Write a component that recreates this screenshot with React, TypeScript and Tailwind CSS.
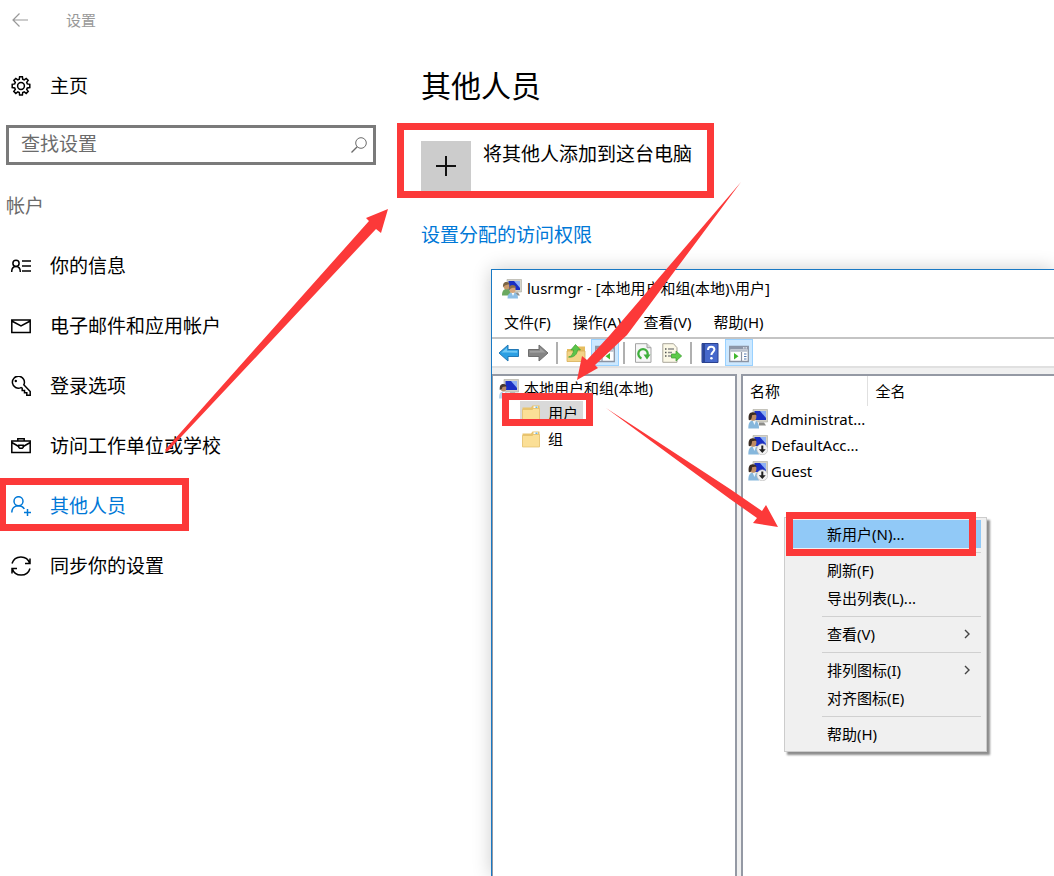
import type { ReactNode } from "react"
import clsx from "clsx"

function Stroke({ children }: { children: ReactNode }) {
  return (
    <svg
      viewBox="0 0 20 20"
      className="h-5 w-5 shrink-0"
      fill="none"
      stroke="currentColor"
      strokeWidth="1.5"
      aria-hidden="true"
    >
      {children}
    </svg>
  )
}

function GearIcon() {
  return (
    <Stroke>
      <circle cx="10" cy="10" r="3.4" />
      <path d="M8.3 3.2 8.6.8h2.8l.3 2.4 1.5.7 2-1.5 2 2-1.5 2 .6 1.5 2.5.4v3.2l-2.5.4-.6 1.5 1.5 2-2 2-2-1.5-1.5.7-.3 2.4H8.6l-.3-2.4-1.5-.7-2 1.5-2-2 1.5-2-.6-1.5-2.5-.4V8.3l2.5-.4.6-1.5-1.5-2 2-2 2 1.5z" />
    </Stroke>
  )
}

function InfoIcon() {
  return (
    <Stroke>
      <circle cx="5" cy="7.3" r="3.1" />
      <path d="M.7 16c0-3.3 1.8-5.4 4.3-5.4S9.300 12.700 9.300 16M11 5h9M11 10h9M11 15h9" />
    </Stroke>
  )
}

function MailIcon() {
  return (
    <Stroke>
      <path d="M.8 4h18.4v12.500H.8zM.8 5l9.200 5 9.200-5" />
    </Stroke>
  )
}

function KeyIcon() {
  return (
    <Stroke>
      <path d="M12.800 8.800 19.200 15.500v3.700h-3.400v-2.500h-2.300v-2.300h-2.300v-2.200l-1.200-.6A6 6 0 1 1 12.800 8.800z" />
      <circle cx="4.800" cy="5" r="1.200" fill="currentColor" stroke="none" />
    </Stroke>
  )
}

function CaseIcon() {
  return (
    <Stroke>
      <path d="M.8 5h18.400v11.500H.8zM6.800 5V2.700h6.400V5M.8 6.500l7 4M19.200 6.500l-7 4M7.800 9.300h4.400v2.200l-1 .8H8.800l-1-.8z" />
    </Stroke>
  )
}

function AddPersonIcon() {
  return (
    <Stroke>
      <circle cx="7.500" cy="5.200" r="4.500" />
      <path d="M.8 16.500c0-4.200 2.700-6.800 6.700-6.800 2.700 0 4.700 1.200 5.800 3.300M16.500 13v7M13 16.500h7" />
    </Stroke>
  )
}

function SyncIcon() {
  return (
    <Stroke>
      <path d="M1 7.500a9.300 9.300 0 0 1 17.800 0M19 2.500v5h-5M19 12.500a9.300 9.300 0 0 1-17.800 0M1 17.500v-5h5" />
    </Stroke>
  )
}

function FolderIcon() {
  return (
    <svg viewBox="0 0 18 18" className="h-[18px] w-[18px] shrink-0" aria-hidden="true">
      <path d="M.5 3.500H9L10.500 1.500H17.500V16H.5z" fill="#e9c36c" />
      <path d="M11.500 2.300h4.500v2h-4.500z" fill="#fff" />
      <path d="M13.500 2.600h2v1.200h-2z" fill="#4aa3df" />
      <path d="M.5 5.500h9.800l1.200-1h6v12.500H.5z" fill="#fbdf96" stroke="#e2bd68" strokeWidth=".7" />
    </svg>
  )
}

function Monitor() {
  return (
    <>
      <path d="M5 .5h14.500v12.500H5z" fill="#d5d3c8" stroke="#aaa99f" strokeWidth=".6" />
      <path d="M6.500 2H18v9H6.500z" fill="#1a2fc4" />
      <path d="M12 2h6v7z" fill="#8eb0f5" />
      <path d="M11 13.500h5l2 3h-7z" fill="#8e8e8a" />
    </>
  )
}

function UserIcon({ disabled = false }: { disabled?: boolean }) {
  return (
    <svg viewBox="0 0 20 20" className="h-5 w-5 shrink-0" aria-hidden="true">
      <Monitor />
      <path d="M.3 19.500c0-5.500 1.500-8 5.200-8s5.500 2.500 5.500 8z" fill="#86b7dc" />
      <path d="M4.500 11.500H8L6.500 16z" fill="#eef6fb" />
      <ellipse cx="5" cy="7.800" rx="3.400" ry="4" fill="#c08d62" />
      <path d="M.8 11C0 6 1.500 3.300 4.600 3.300c2.400 0 3.700 1 3.900 2.700-2-.4-3.400-.2-4.500.3 0 2.200-.6 4-1.700 5z" fill="#3b2c23" />
      {disabled && (
        <>
          <circle cx="14.300" cy="14.300" r="5.500" fill="#f1f1f1" stroke="#b5b5b5" strokeWidth=".6" />
          <path d="M13.300 10.500h2v3.700h2.400l-3.400 3.800-3.400-3.800h2.400z" fill="#222" />
        </>
      )}
    </svg>
  )
}

function GroupIcon() {
  return (
    <svg viewBox="0 0 20 20" className="h-5 w-5 shrink-0" aria-hidden="true">
      <Monitor />
      <path d="M0 16.500c0-4 1.300-6.500 4.500-6.500s4.500 2.500 4.500 6.500z" fill="#6aa860" />
      <ellipse cx="4.500" cy="7" rx="2.900" ry="3.500" fill="#c99a6b" />
      <path d="M1 8.500C.8 4.500 2 3 4.500 3c2 0 3 1 3 2.500C5.500 5.500 3 5.500 1 8.500z" fill="#7a6444" />
      <path d="M5.500 19.500c0-4 1.700-6 5.200-6s5.300 2 5.300 6z" fill="#8dbfe6" />
      <path d="M9.500 13.500h3l-1.500 3.500z" fill="#fff" />
      <ellipse cx="10.500" cy="10.500" rx="3.100" ry="3.600" fill="#d6a67c" />
      <path d="M7 11c-.3-3.500 1-5 3.600-5 2.300 0 3.400 1.400 3.400 3-3-.4-5 0-7 2z" fill="#8a6d4b" />
    </svg>
  )
}

function ComputerIcon() {
  return (
    <svg viewBox="0 0 20 20" className="h-5 w-5 shrink-0" aria-hidden="true">
      <Monitor />
      <path d="M0 19.500c0-5 1.300-7 4.500-7s5 2 5 7z" fill="#b9d3e8" />
      <path d="M3.500 12.500h3l-1.500 4z" fill="#fff" />
      <ellipse cx="4.500" cy="9" rx="2.800" ry="3.500" fill="#b98d6b" />
      <path d="M.8 11C.3 6.500 2 5 4.400 5c2 0 3.100 1 3.100 2.500-2-.2-3 0-4 .5-.2 1.500-.9 2.500-2.700 3z" fill="#463831" />
    </svg>
  )
}

function ArrowIcon({ forward = false }: { forward?: boolean }) {
  return (
    <svg viewBox="0 0 22 20" className={clsx("h-5 w-[22px]", forward && "-scale-x-100")} aria-hidden="true">
      <path
        d="M1 10 10 2v4.500h10.500v7H10V18z"
        fill={forward ? "#858585" : "#2b9fe3"}
        stroke={forward ? "#6f6f6f" : "#2278b5"}
        strokeLinejoin="round"
      />
      <path d="M3.500 9.500 9 4.700v3h10.300v2z" fill={forward ? "#a0a0a0" : "#6fc8f5"} />
    </svg>
  )
}

function UpFolderIcon() {
  return (
    <svg viewBox="0 0 20 20" className="h-5 w-5" aria-hidden="true">
      <path d="M1 6h8l2-2.500h8V18H1z" fill="#e6bd5f" />
      <path d="M1 8h18v10.500H1z" fill="#f3d487" stroke="#d8ae55" strokeWidth=".8" />
      <path d="M2.500 14c3-.5 5-3.500 5-7H4.800L9.500 1.500l5 5.500h-3c-.3 4.500-4 8-9 7z" fill="#5cc54a" stroke="#3c9f32" strokeWidth=".7" />
    </svg>
  )
}

function PaneIcon({ right = false }: { right?: boolean }) {
  return (
    <svg viewBox="0 0 20 20" className="h-5 w-5" aria-hidden="true">
      <path d="M.7 3.500h18.600v15H.7z" fill="#fff" stroke="#8a93a3" strokeWidth="1.300" />
      <path d="M1 3.500h18v3H1z" fill="#8d97a8" />
      <path d="M14 4.300h1.500v1.300H14zM16.500 4.300H18v1.300h-1.500z" fill="#e9eef5" />
      <path d="M1.300 7.800h17.400" stroke="#b9c1ce" strokeWidth="2" />
      {right ? (
        <>
          <path d="M12.500 9v9" stroke="#8a93a3" strokeWidth="1.200" />
          <path d="M5 10v6.600l4.500-3.300z" fill="#42b82f" />
          <path d="M15 11h2.500M15 13.500h2.500M15 16h2.500" stroke="#5379b0" strokeWidth="1.200" />
        </>
      ) : (
        <>
          <path d="M7 9v9" stroke="#8a93a3" strokeWidth="1.200" />
          <path d="M15 10v6.600l-4.500-3.300z" fill="#42b82f" />
          <path d="M2.500 11H5M2.500 13.500H5M2.500 16H5" stroke="#5379b0" strokeWidth="1.200" />
        </>
      )}
    </svg>
  )
}

function RefreshIcon() {
  return (
    <svg viewBox="0 0 20 20" className="h-5 w-5" aria-hidden="true">
      <path d="M2.500.7h11.500l4 4v14.600H2.500z" fill="#f6f6f6" stroke="#a3a3a3" />
      <path d="M14 .7v4h4" fill="#ddd" stroke="#a3a3a3" />
      <path d="M8.500 15.300a4.700 4.700 0 1 1 5.800-2.500" fill="none" stroke="#3faf3c" strokeWidth="2.300" />
      <path d="M10.500 11.500h7l-3.500 5z" fill="#3faf3c" />
    </svg>
  )
}

function ExportIcon() {
  return (
    <svg viewBox="0 0 20 20" className="h-5 w-5" aria-hidden="true">
      <path d="M.8.7h10.700l3.500 4v14.600H.8z" fill="#fbf8e6" stroke="#a9a69a" />
      <path d="M3 6h1.500M3 9.500h1.500M3 13h1.500" stroke="#555" strokeWidth="1.300" />
      <path d="M6 6h6M6 9.500h4M6 13h4" stroke="#8a8a8a" strokeWidth="1.300" />
      <path d="M9.500 11H14V8l5.700 5-5.700 5v-3H9.500z" fill="#5ccb48" stroke="#3c9c30" strokeWidth=".7" />
    </svg>
  )
}

function HelpIcon() {
  return (
    <svg viewBox="0 0 20 20" className="h-5 w-5" aria-hidden="true">
      <path d="M2 .5h16v19H2z" fill="#4668cb" stroke="#2a418f" />
      <path d="M2.500.5h2.500v19H2.500z" fill="#2b4596" />
      <path d="M8 7c0-2.300 1.300-3.300 3.200-3.300 2 0 3.200 1.100 3.200 2.800 0 2.400-3 2.600-3 5.500" fill="none" stroke="#fff" strokeWidth="2" />
      <circle cx="11.400" cy="15.300" r="1.300" fill="#fff" />
    </svg>
  )
}

const navItems = [
  { label: "你的信息", icon: <InfoIcon /> },
  { label: "电子邮件和应用帐户", icon: <MailIcon /> },
  { label: "登录选项", icon: <KeyIcon /> },
  { label: "访问工作单位或学校", icon: <CaseIcon /> },
  { label: "其他人员", icon: <AddPersonIcon />, active: true },
  { label: "同步你的设置", icon: <SyncIcon /> },
]

const users = [
  { name: "Administrat...", disabled: false },
  { name: "DefaultAcc...", disabled: true },
  { name: "Guest", disabled: true },
]

const menuGroups = [
  [{ label: "新用户(N)...", selected: true }],
  [{ label: "刷新(F)" }, { label: "导出列表(L)..." }],
  [{ label: "查看(V)", submenu: true }],
  [{ label: "排列图标(I)", submenu: true }, { label: "对齐图标(E)" }],
  [{ label: "帮助(H)" }],
] as { label: string; selected?: boolean; submenu?: boolean }[][]

function Sidebar() {
  return (
    <aside className="w-[376px] shrink-0 pl-[6px]">
      <a href="#home" className="mt-4 flex h-[60px] items-center gap-[19px] pl-[5px]">
        <GearIcon />
        主页
      </a>
      <label className="mt-[9px] flex h-10 items-center border-3 border-[#7a7a7a] pr-[6px] pl-3">
        <input
          type="search"
          aria-label="查找设置"
          placeholder="查找设置"
          className="min-w-0 flex-1 bg-transparent pb-[2px] leading-7 outline-none placeholder:text-[#6b6b6b]"
        />
        <svg viewBox="0 0 16 16" className="h-4 w-4 text-[#6b6b6b]" fill="none" stroke="currentColor" aria-hidden="true">
          <circle cx="10" cy="6" r="5.300" />
          <path d="M6.200 9.800.5 15.500" strokeWidth="1.300" />
        </svg>
      </label>
      <h2 className="mt-[26px] h-[45px] leading-[30px] text-[#6b6b6b]">帐户</h2>
      <nav>
        {navItems.map((item) => (
          <a
            key={item.label}
            href="#accounts"
            className={clsx("flex h-[60px] items-center gap-[19px] pl-[5px]", item.active && "text-[#0078d7]")}
          >
            {item.icon}
            {item.label}
          </a>
        ))}
      </nav>
    </aside>
  )
}

function OtherPeople() {
  return (
    <main className="flex-1 pt-6 pl-[45px]">
      <h1 className="text-[30px] leading-[44px]">其他人员</h1>
      <button type="button" className="mt-[33px] flex items-start gap-3">
        <span className="flex h-[50px] w-[50px] items-center justify-center bg-[#ccc]">
          <svg viewBox="0 0 20 20" className="h-5 w-5" stroke="#111" strokeWidth="2" aria-hidden="true">
            <path d="M10 0v20M0 10h20" />
          </svg>
        </span>
        <span className="leading-[26px]">将其他人添加到这台电脑</span>
      </button>
      <a href="#access" className="mt-[30px] inline-block leading-7 text-[#0078d7]">
        设置分配的访问权限
      </a>
    </main>
  )
}

function ToolButton({ label, pressed, children }: { label: string; pressed?: boolean; children: ReactNode }) {
  return (
    <button
      type="button"
      aria-label={label}
      className={clsx(
        "flex h-[27px] w-7 items-center justify-center border",
        pressed ? "border-[#99d1ff] bg-[#cce8ff]" : "border-transparent",
      )}
    >
      {children}
    </button>
  )
}

function Divider() {
  return <span className="mx-[3px] h-[22px] w-[2px] bg-[#b0b0b0]" />
}

function UserManager() {
  return (
    <section className="absolute top-[269px] right-0 bottom-0 left-[491px] flex flex-col border-t border-l border-[#1979c4] bg-white text-[15px] shadow-[0_0_18px_rgba(0,0,0,0.2)]">
      <header className="flex h-[37px] items-center gap-[5px] pl-[10px]">
        <GroupIcon />
        lusrmgr - [本地用户和组(本地)\用户]
      </header>
      <div className="flex h-[30px] items-center gap-[22px] pl-3">
        {["文件(F)", "操作(A)", "查看(V)", "帮助(H)"].map((label) => (
          <button key={label} type="button">
            {label}
          </button>
        ))}
      </div>
      <div className="flex h-[31px] items-center gap-px border-t-2 border-b-2 border-t-[#c4c4c4] border-b-[#e0e0e0] pl-[3px]">
        <ToolButton label="后退">
          <ArrowIcon />
        </ToolButton>
        <ToolButton label="前进">
          <ArrowIcon forward />
        </ToolButton>
        <Divider />
        <ToolButton label="上移">
          <UpFolderIcon />
        </ToolButton>
        <ToolButton label="控制台树" pressed>
          <PaneIcon />
        </ToolButton>
        <Divider />
        <ToolButton label="刷新">
          <RefreshIcon />
        </ToolButton>
        <ToolButton label="导出列表">
          <ExportIcon />
        </ToolButton>
        <Divider />
        <ToolButton label="帮助">
          <HelpIcon />
        </ToolButton>
        <ToolButton label="操作窗格" pressed>
          <PaneIcon right />
        </ToolButton>
      </div>
      <div className="flex flex-1 gap-1 bg-[#f0f0f0] pt-[6px]">
        <ul className="w-[245px] border-t-2 border-r-2 border-l border-[#9499a4] bg-white">
          <li>
            <button type="button" className="flex h-[25px] items-center gap-[5px] pl-[6px]">
              <ComputerIcon />
              本地用户和组(本地)
            </button>
            <ul className="pl-[27px]">
              <li>
                <button type="button" className="flex h-6 items-center gap-2 bg-[#d9d9d9] pr-[5px] pl-[2px]">
                  <FolderIcon />
                  用户
                </button>
              </li>
              <li>
                <button type="button" className="flex h-7 items-center gap-2 pl-[2px]">
                  <FolderIcon />
                  组
                </button>
              </li>
            </ul>
          </li>
        </ul>
        <div className="flex-1 border-t-2 border-l-2 border-[#9499a4] bg-white">
          <table className="w-full table-fixed text-left">
            <thead>
              <tr className="h-[30px]">
                <th className="w-[124px] border-r border-[#e0e0e0] pl-[7px] font-normal">名称</th>
                <th className="pl-2 font-normal">全名</th>
              </tr>
            </thead>
            <tbody>
              {users.map((user) => (
                <tr key={user.name} className="h-[26px]">
                  <td className="p-0 pl-[5px]">
                    <span className="flex items-center gap-[3px]">
                      <UserIcon disabled={user.disabled} />
                      {user.name}
                    </span>
                  </td>
                  <td />
                </tr>
              ))}
            </tbody>
          </table>
        </div>
      </div>
    </section>
  )
}

function ContextMenu() {
  return (
    <div
      role="menu"
      className="absolute top-[517px] left-[784px] w-[203px] border border-[#ccc] bg-[#f0f0f0] pt-[2px] pr-[5px] pb-[3px] pl-[3px] text-[15px] shadow-[3px_3px_2px_rgba(0,0,0,0.45)]"
    >
      {menuGroups.map((group, i) => (
        <div key={group[0].label}>
          {i > 0 && <hr className="mt-1 mb-[3px] ml-[34px] border-[#d0d0d0]" />}
          {group.map((item) => (
            <button
              key={item.label}
              type="button"
              role="menuitem"
              className={clsx(
                "flex h-7 w-full items-center justify-between pr-[10px] pl-[39px]",
                item.selected && "bg-[#91c9f7]",
              )}
            >
              {item.label}
              {item.submenu && (
                <svg viewBox="0 0 8 10" className="h-[10px] w-2" fill="none" stroke="#444" strokeWidth="1.400" aria-hidden="true">
                  <path d="m2 1 4 4-4 4" />
                </svg>
              )}
            </button>
          ))}
        </div>
      ))}
    </div>
  )
}

// Red frames and arrows that walk through the steps
function Annotations() {
  return (
    <svg
      width="1054"
      height="876"
      viewBox="0 0 1054 876"
      className="pointer-events-none absolute top-0 left-0 max-w-none"
      aria-hidden="true"
    >
      <g fill="none" stroke="#fc3939" strokeWidth="7">
        <rect x="400.500" y="126.500" width="310" height="68" />
        <rect x="2.500" y="481.500" width="183" height="46" />
        <rect x="505.500" y="396.500" width="84" height="26" />
        <rect x="789.500" y="515.500" width="183" height="37" />
      </g>
      <g fill="#fc3939">
        <path d="M165 450 369 221 366 218 388 209 381 233 376 229 167 452z" />
        <path d="M741 182 610 335 587 360 582 356 577 380 598 368 595 365 627 335z" />
        <path d="M606 408 730 489 762 511 766 505 778 527 753 523 757 518 730 499z" />
      </g>
    </svg>
  )
}

export default function App() {
  return (
    <div className="relative min-h-screen overflow-hidden bg-white font-['Noto_Sans','Noto_Sans_CJK_SC',sans-serif] text-[19px] text-black">
      <header className="flex h-10 items-center gap-[38px] pl-3 text-[15px] text-[#999]">
        <button type="button" aria-label="返回">
          <svg viewBox="0 0 16 14" className="h-[14px] w-4" fill="none" stroke="currentColor" strokeWidth="1.200" aria-hidden="true">
            <path d="M16 7H1M7.500.5 1 7l6.500 6.500" />
          </svg>
        </button>
        设置
      </header>
      <div className="flex">
        <Sidebar />
        <OtherPeople />
      </div>
      <UserManager />
      <ContextMenu />
      <Annotations />
    </div>
  )
}
